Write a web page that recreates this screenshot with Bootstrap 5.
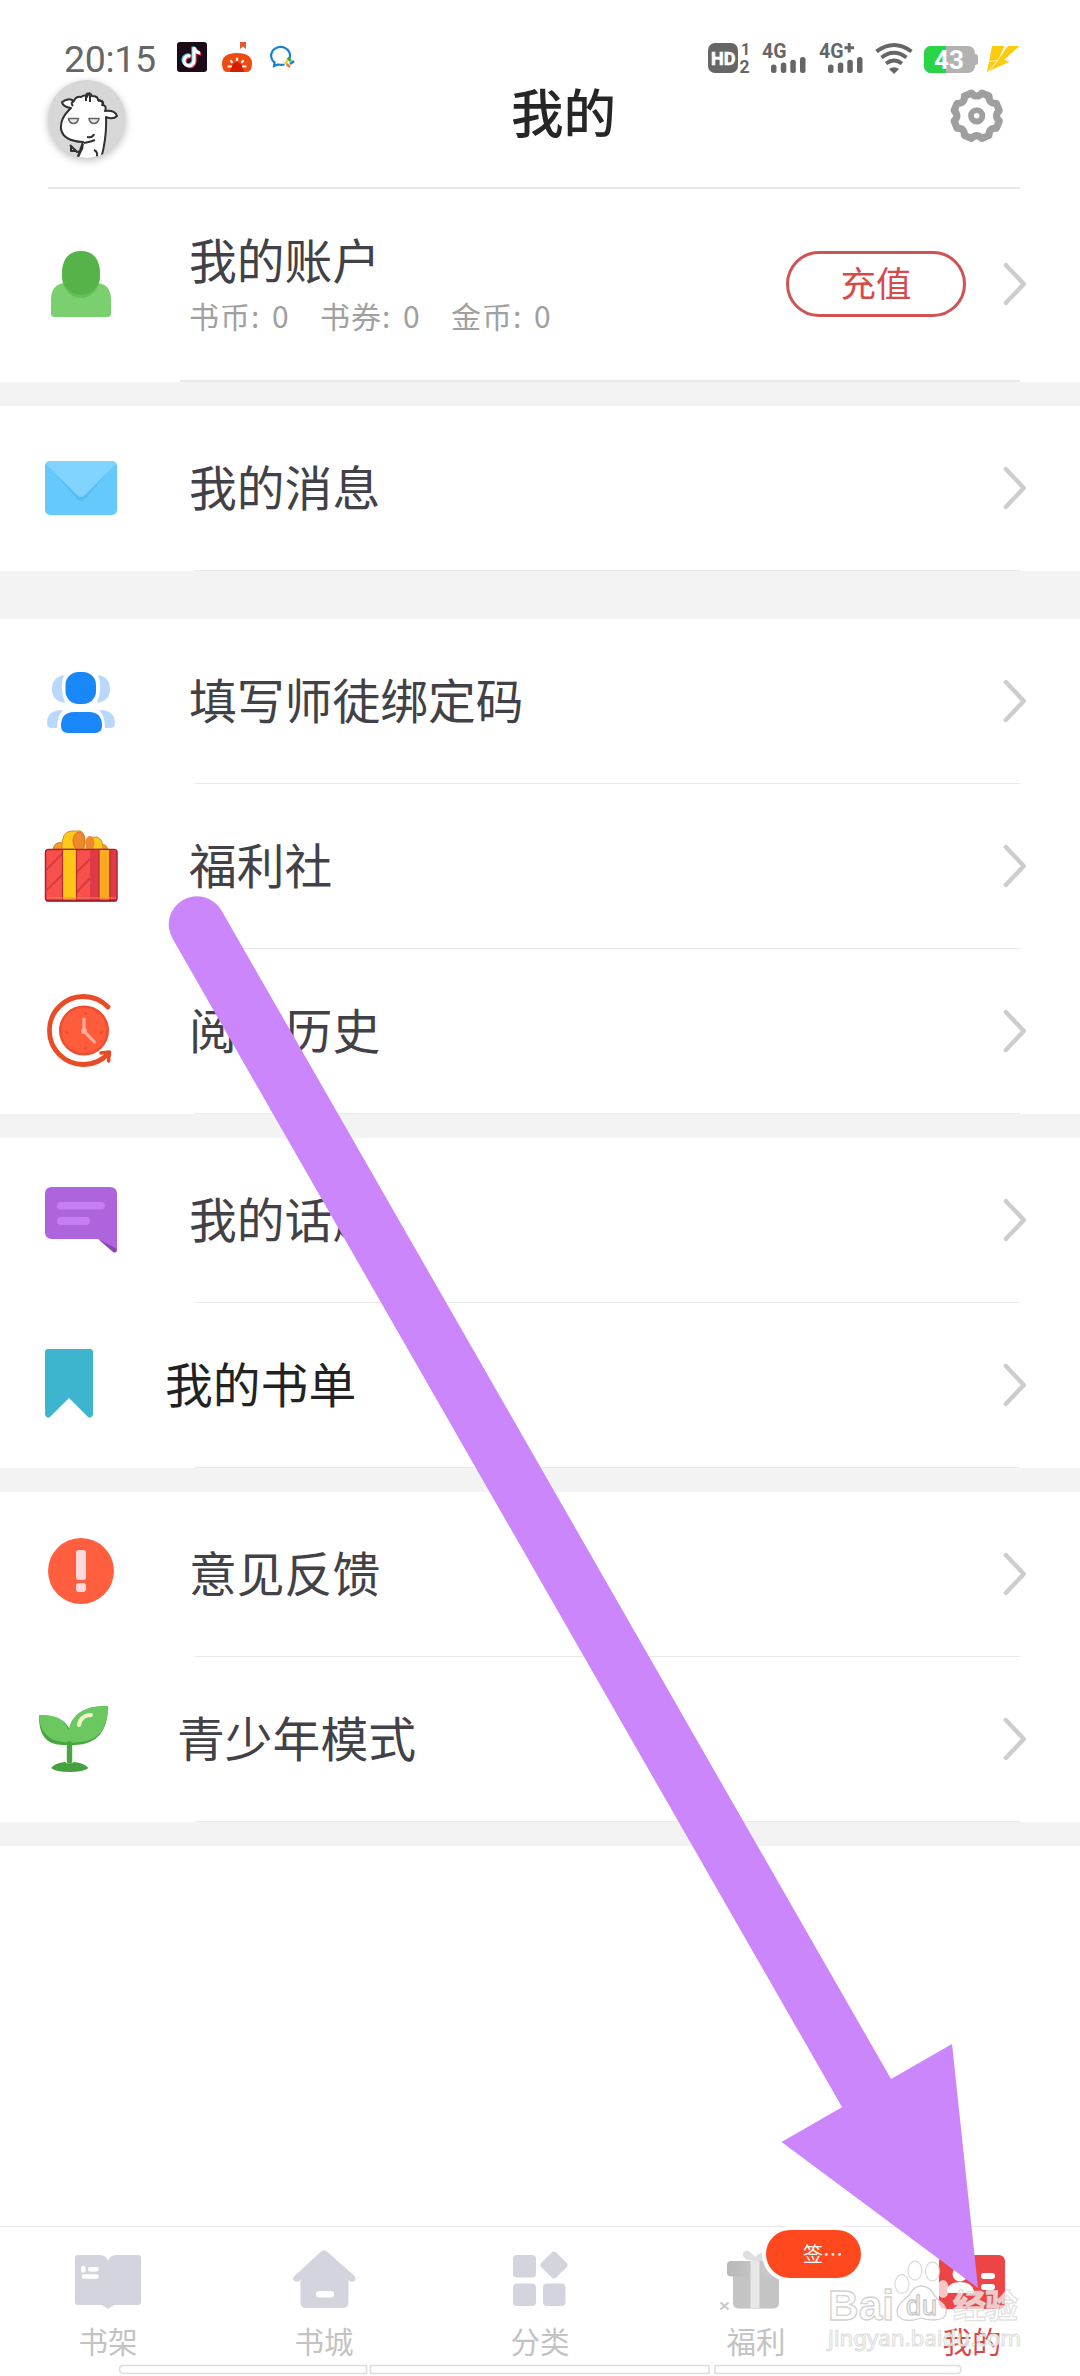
<!DOCTYPE html>
<html lang="zh-CN">
<head>
<meta charset="utf-8">
<meta name="viewport" content="width=device-width, initial-scale=1">
<title>我的</title>
<link rel="stylesheet" href="https://cdn.jsdelivr.net/npm/bootstrap@5.3.0/dist/css/bootstrap.min.css">
<style>
  body { font-family: "Noto Sans CJK SC", "Noto Sans", sans-serif; background: #fff; color: #414147; }
  svg { display: block; flex: none; }
  .screen { width: 1080px; height: 2376px; }
  .status-bar { height: 76px; padding: 36px 60px 0 64px; color: #666; }
  .clock { font: 37.5px/46px Roboto, sans-serif; width: 113px; letter-spacing: -.3px; }
  .title-bar { height: 113px; margin: 0 60px 0 48px; border-bottom: 2px solid #e9e9ea; }
  .avatar { margin: -7px 0 0 -8px; }
  .page-title { font-size: 52.5px; line-height: 76px; font-weight: 500; color: #262626; padding-left: 59px; margin-top: -4px; }
  .entry { height: 165px; background: linear-gradient(#e9e9eb, #e9e9eb) 195px 100% / 825px 1px no-repeat #fff; padding: 0 53px 0 30px; }
  .entry-account { height: 193px; padding-bottom: 3px; background-position: 180px 100%; background-size: 840px 2px; }
  .entry-label { font-size: 47.8px; line-height: 60px; margin-left: 59px; padding-bottom: 6px; }
  .label-book { margin-left: 35px; color: #222; }
  .label-teen { margin-left: 47px; }
  .chevron { margin-bottom: 1px; }
  .section-gap { height: 24px; background: #f3f3f3; }
  .section-gap-lg { height: 48px; }
  .account-copy { margin-left: 59px; padding-top: 1px; }
  .account-name { font-size: 47.8px; line-height: 54px; }
  .coins { font-size: 30px; line-height: 44px; color: #a0a0a0; margin-top: 7px; }
  .coins > div { width: 131px; }
  .coins span { display: inline-block; width: 83px; letter-spacing: 1px; }
  .btn-recharge { width: 180px; height: 66px; padding: 0; border: 3px solid #cf5353; border-radius: 33px; color: #d84a4a; font-size: 35.5px; line-height: 55px; padding-bottom: 5px; margin-right: 37px; }
  .tab-bar { height: 150px; border-top: 1px solid #e8e8e8; padding-top: 13px; }
  .tab-item { color: #c3c3c3; font-size: 29.5px; line-height: 40px; text-decoration: none; }
  .tab-item.current { color: #d94848; }
  .tab-item svg { margin-bottom: 5px; }
  .sign-badge { left: 118px; top: -10px; width: 95px; height: 48px; border-radius: 24px; background: #ff481d; color: #fff; font-size: 20px; line-height: 48px; padding-left: 37px; box-shadow: 0 0 0 4px #fff; }
  .overlay { left: 0; top: 0; pointer-events: none; }
</style>
<script src="https://cdn.jsdelivr.net/npm/bootstrap@5.3.0/dist/js/bootstrap.bundle.min.js"></script>
</head>
<body>
<svg width="0" height="0" class="position-absolute">
  <symbol id="chev" viewBox="0 0 24 44"><path d="M2.8 3 20.800 22 2.800 41" fill="none" stroke="#cdcdcd" stroke-width="4.400" stroke-linecap="round" stroke-linejoin="round"/></symbol>
</svg>
<div class="screen position-relative overflow-hidden d-flex flex-column">

  <div class="status-bar d-flex align-items-start">
    <div class="clock">20:15</div>
    <svg width="120" height="40" viewBox="177 36 120 40">
      <rect x="177" y="42" width="30" height="30" rx="3" fill="#1d0a18"/>
      <g fill="none" stroke-width="3.200"><path d="M190.500 56a5 5 0 1 0 3.500 5V47.500q1.500 5 6 5.500" stroke="#ee3b5b" transform="translate(1 .8)"/><path d="M190.500 56a5 5 0 1 0 3.500 5V47.500q1.500 5 6 5.500" stroke="#35d5dc" transform="translate(-1 -.8)"/><path d="M190.500 56a5 5 0 1 0 3.500 5V47.500q1.500 5 6 5.500" stroke="#fff"/></g>
      <path d="M240 42h6v7l-3-2.500-3 2.500z" fill="#e25a2c"/>
      <path d="M222 63c0-6 5-10 15-10s15 4 15 10c0 6-2 9-5 9h-20c-3 0-5-3-5-9z" fill="#ee4b14"/>
      <path d="M230 72q2-10 7-10t7 10z" fill="#d51c05"/>
      <g stroke="#fff3e8" stroke-width="2.200" stroke-linecap="round"><path d="M237 58.500v1.500M231 61l1 1.200M243 61l-1 1.200M228.500 66.500h2.500M243 66.500h2.500"/></g>
      <path d="M284.500 64.500q-3 .8-6.500 0l-4 1.500.6-3.500a9.500 8.800 0 1 1 15-4" fill="none" stroke="#1781cf" stroke-width="2.200"/>
      <path d="m287.500 58 3.500 3" stroke="#36a936" stroke-width="2.600"/><path d="m290 64 4-3" stroke="#1580cd" stroke-width="2.600"/><path d="m286.500 64 3.500 3" stroke="#f47c28" stroke-width="2.600"/><path d="m285 64 3-4" stroke="#f3c928" stroke-width="2.200"/>
    </svg>
    <svg class="ms-auto" width="316" height="40" viewBox="704 36 316 40" font-family="Roboto, sans-serif" font-weight="700" fill="#666">
      <rect x="708" y="43" width="30" height="30" rx="7"/><text x="711" y="64.500" font-size="18.500" fill="#fff" stroke="#fff" stroke-width=".6" textLength="24.500" lengthAdjust="spacingAndGlyphs">HD</text>
      <text x="741" y="54.500" font-size="16">1</text><text x="739.500" y="72.500" font-size="17.500">2</text>
      <text x="762" y="57.500" font-size="20.500" textLength="24.500" lengthAdjust="spacingAndGlyphs">4G</text><text x="819" y="57.500" font-size="20.500" textLength="24.500" lengthAdjust="spacingAndGlyphs">4G</text><path d="M849.200 43v9.500M844.500 47.800h9.500" stroke="#666" stroke-width="3"/>
      <g id="bars"><rect x="771" y="64.500" width="5.500" height="8.500" rx="2.500"/><rect x="780.800" y="62.500" width="5.500" height="10.500" rx="2.500"/><rect x="790.300" y="59.800" width="5.500" height="13.200" rx="2.500"/><rect x="800" y="57" width="5.500" height="16" rx="2.500"/></g>
      <use href="#bars" x="57"/>
      <g fill="none" stroke="#666" stroke-width="4"><path d="M876.500 51.500q17.500-13 35 0M881.500 57.500q12.500-9.500 25 0M886 63.500q8-6 16 0"/></g><path d="M889 69q5-3.500 10 0l-5 5z"/>
      <rect x="924" y="46" width="51" height="27" rx="7" fill="#b2b2b2"/><path d="M931 46h15v27h-15a7 7 0 0 1-7-7V53a7 7 0 0 1 7-7z" fill="#29d445"/><path d="M975 54q3 0 3 2.500v6q0 2.500-3 2.500z" fill="#b2b2b2"/>
      <text x="934" y="68.500" font-size="25" fill="#fff" textLength="30" lengthAdjust="spacingAndGlyphs">43</text>
      <path d="M992 46h12.500l-6.500 14 10-14h11.500l-15.500 14 6 1.500-23 10.500z" fill="#fccb0c"/><path d="m989 71 9.500-11.500M988 61.500l10-1" stroke="#fff" stroke-width=".8"/>
    </svg>
  </div>

  <header class="title-bar d-flex justify-content-between align-items-start">
    <svg width="100" height="100" viewBox="40 69 100 100" class="avatar overflow-visible">
      <defs><clipPath id="face"><circle cx="86.800" cy="118.700" r="39"/></clipPath>
      <filter id="soft" x="-30%" y="-30%" width="160%" height="160%"><feGaussianBlur stdDeviation="4"/></filter></defs>
      <circle cx="86.800" cy="121.500" r="38.500" fill="#000" opacity=".28" filter="url(#soft)"/>
      <circle cx="86.800" cy="119" r="39" fill="#d7d7d7"/>
      <g clip-path="url(#face)" stroke="#303030" stroke-width="2" fill="#fff" stroke-linejoin="round">
        <path d="M71 108q-8-1-9-6 7-5 12-1 2-5 7-4 4-3 6 0 2-7 5-1 6 0 6 4 6 0 5 5 4 1 2 6 10-1 12 5-4 4-11 1 1 20-5 42H77l6-17q-20-1-22-13-1-10 8-19z"/>
        <path d="M86 101v-5q1-5 4 0v6M98 101q6-1 4 5M74 101q-4 2-1 5M83 144q-2 8-5 13M95 140q-5 2-11 3M94 150q5 2 2 9" fill="none"/>
        <path d="M68.500 118.500h10q-1 5-5 5t-5-5zM89 118.500h10q-1 5-5 5t-5-5z" fill="#e8e8e8" stroke="#666" stroke-width="1.600"/>
        <path d="M87 137q6 1 7-3M70 145l7 7q7-1 5-7M71 147v4h6" fill="none" stroke-width="2"/>
      </g>
    </svg>
    <h1 class="page-title mb-0">我的</h1>
    <svg width="92" height="80" viewBox="928 76 92 80">
      <g fill="none" stroke="#9f9f9f" stroke-linejoin="round" transform="translate(976.700 115.800)">
      <path stroke-width="7.200" d="M5.200-22.600 12.300-19.700Q12-12 19.700-12.300L22.600-5.200Q17 0 22.600 5.200L19.700 12.300Q12 12 12.300 19.700L5.200 22.600Q0 17-5.200 22.600L-12.300 19.700Q-12 12-19.700 12.300L-22.600 5.200Q-17 0-22.600-5.200L-19.700-12.300Q-12-12-12.300-19.700L-5.200-22.600Q0-17 5.200-22.600z"/>
      <circle r="5.700" stroke-width="5.800"/></g>
    </svg>
  </header>

  <main>
    <div class="entry entry-account d-flex align-items-center">
      <svg width="100" height="100" viewBox="30 234 100 100"><path d="M51 314v-14q0-16 14-17h32q14 1 14 17v14q0 3-4 3H55q-4 0-4-3z" fill="#7acf6f"/><path d="M62 276c0-16 7-23 19-23s19 7 19 23c0 12-8 22-19 22s-19-10-19-22z" fill="#66bf59"/><path d="M62 274c0-15 7-23 19-23s19 8 19 23c0 12-8 21-19 21s-19-9-19-21z" fill="#56b349"/></svg>
      <div class="account-copy"><div class="account-name">我的账户</div>
        <div class="coins d-flex"><div><span>书币:</span>0</div><div><span>书券:</span>0</div><div><span>金币:</span>0</div></div></div>
      <button class="btn btn-recharge ms-auto" type="button">充值</button>
      <svg width="24" height="44"><use href="#chev"/></svg>
    </div>
    <div class="section-gap"></div>
    <div class="entry d-flex align-items-center">
      <svg width="100" height="101" viewBox="30 438 100 101"><rect x="45" y="461" width="72" height="54" rx="5" fill="#65c9fc"/><path d="m46 463 31 36q4 4 8 0l31-36z" fill="#55bdf4"/><path d="M46 464q1-3 5-3h60q4 0 5 3L85 495q-4 4-8 0z" fill="#81d4ff"/></svg>
      <div class="entry-label">我的消息</div><svg class="chevron ms-auto" width="24" height="44"><use href="#chev"/></svg>
    </div>
    <div class="section-gap section-gap-lg"></div>

    <div class="entry d-flex align-items-center">
      <svg width="100" height="101" viewBox="30 651 100 101"><g fill="#b9d9fc"><path d="M64 675q-5 12 1 28-13-2-13-14t12-14zM98 675q5 12-1 28 13-2 13-14t-12-14zM63 710q-6 6-6 18h-5q-5 0-5-5 0-13 16-13zM99 710q6 6 6 18h5q5 0 5-5 0-13-16-13z"/></g><rect x="65.500" y="672" width="30.500" height="32" rx="13" fill="#1a87f8"/><path d="M74 712h15q13 0 13 14 0 7-7 7H68q-7 0-7-7 0-14 13-14z" fill="#1a87f8"/></svg>
      <div class="entry-label">填写师徒绑定码</div><svg class="chevron ms-auto" width="24" height="44"><use href="#chev"/></svg>
    </div>
    <div class="entry d-flex align-items-center">
      <svg width="100" height="101" viewBox="30 816 100 101"><path d="M53 849q2-8 9-6l5 6zM96 849q8-9 12 0z" fill="#f39a2c" stroke="#d67a25"/><path d="M62 849q-1-18 10-18h9q6 5 3 18z" fill="#ffc91a" stroke="#d8892b"/><ellipse cx="79" cy="841" rx="6" ry="9" fill="#ef872c" stroke="#d6732b"/><path d="M86 849q0-13 11-12 6 2 6 12z" fill="#ffc91a" stroke="#d8892b"/><ellipse cx="90" cy="843" rx="4.500" ry="7" fill="#ef872c"/>
      <rect x="45.500" y="849.500" width="71.500" height="51.500" rx="3" fill="#f8514b" stroke="#a92030" stroke-width="1.500"/><path d="M90 850h26v50H90z" fill="#df3a48"/><path d="m46 870 17-17M46 891l17-17M76 873l14-14M76 893l14-15" stroke="#d43c41" stroke-width="2"/><path d="M63 850h13v50H63z" fill="#ffc61a"/><path d="M99 850h10.500v50H99z" fill="#fba922"/><path d="M62.500 850v50M76.500 850v50M99 850v50M110 850v50" stroke="#b72b31" stroke-width="1.200"/><path d="M47 898h69" stroke="#ff7b5e" stroke-width="2" opacity=".5"/><path d="M46 900.500h71" stroke="#a92030" stroke-width="2"/></svg>
      <div class="entry-label">福利社</div><svg class="chevron ms-auto" width="24" height="44"><use href="#chev"/></svg>
    </div>
    <div class="entry d-flex align-items-center">
      <svg width="100" height="101" viewBox="30 981 100 101"><path d="M108 1007a34 34 0 1 0 0 47" fill="none" stroke="#e94b27" stroke-width="4.800" stroke-linecap="round"/><path d="m101 1053 8.500-1-1 9" fill="none" stroke="#e94b27" stroke-width="3.500" stroke-linecap="round" stroke-linejoin="round"/><circle cx="84" cy="1030.500" r="23.800" fill="#ff5c3c" stroke="#ec4e2f" stroke-width="2.400"/><g fill="#e84e31"><circle cx="85.500" cy="1013.500" r="1.500"/><circle cx="85.500" cy="1048.500" r="1.500"/><circle cx="66.500" cy="1032.500" r="1.500"/><circle cx="101.500" cy="1032.500" r="1.500"/></g><path d="M84 1019v12l10.500 11" fill="none" stroke="#ffad9b" stroke-width="3.200" stroke-linecap="round"/><circle cx="84" cy="1031" r="3" fill="#ffad9b"/></svg>
      <div class="entry-label">阅读历史</div><svg class="chevron ms-auto" width="24" height="44"><use href="#chev"/></svg>
    </div>
    <div class="section-gap"></div>

    <div class="entry d-flex align-items-center">
      <svg width="100" height="101" viewBox="30 1170 100 101"><path d="m98 1239 15 13q4 2 4-3v-3z" fill="#8a46b4"/><path d="M52 1187h58q7 0 7 7v55l-19-10H52q-7 0-7-7v-38q0-7 7-7z" fill="#ae64dc"/><rect x="57" y="1202" width="48" height="7.500" rx="3.700" fill="#c67ff2"/><rect x="57" y="1217" width="33" height="8" rx="3.800" fill="#c67ff2"/></svg>
      <div class="entry-label">我的话题</div><svg class="chevron ms-auto" width="24" height="44"><use href="#chev"/></svg>
    </div>
    <div class="entry d-flex align-items-center">
      <svg width="100" height="101" viewBox="30 1335 100 101"><path d="M48 1349h42q3 0 3 3v63q-2 4-5 2l-19-19-19 19q-3 2-5-2v-63q0-3 3-3z" fill="#3db5cf"/></svg>
      <div class="entry-label label-book">我的书单</div><svg class="chevron ms-auto" width="24" height="44"><use href="#chev"/></svg>
    </div>
    <div class="section-gap"></div>

    <div class="entry d-flex align-items-center">
      <svg width="100" height="101" viewBox="30 1524 100 101"><circle cx="81" cy="1571" r="33" fill="#ff5f3f"/><rect x="76" y="1550" width="10" height="30" rx="3" fill="#ffd9da"/><rect x="76" y="1583" width="10" height="9" rx="3" fill="#ffd9da"/></svg>
      <div class="entry-label">意见反馈</div><svg class="chevron ms-auto" width="24" height="44"><use href="#chev"/></svg>
    </div>
    <div class="entry d-flex align-items-center">
      <svg width="100" height="101" viewBox="30 1689 100 101"><path d="M39 1715q-1 30 24 30h12q33-1 33-39-34-1-38 24-6-15-31-15z" fill="#48a641"/><path d="M39 1715q24-1 29.500 15 5-25 39.500-24 0 29-21 35-18 4-33-1-15-7-15-25z" fill="#6bc861"/><path d="M79 1725q2-10 12-10" fill="none" stroke="#edf8c7" stroke-width="4" stroke-linecap="round"/><path d="M51 1768q4-5 14-6 4 3 9 0 10 1 14.500 6-5 4-19 4t-18.500-4z" fill="#45a23e"/><path d="M69.500 1744v17" stroke="#48a641" stroke-width="5.400" stroke-linecap="round"/></svg>
      <div class="entry-label label-teen">青少年模式</div><svg class="chevron ms-auto" width="24" height="44"><use href="#chev"/></svg>
    </div>
    <div class="section-gap"></div>
  </main>

  <nav class="tab-bar mt-auto d-flex">
    <a class="tab-item col d-flex flex-column align-items-center" href="#"><svg width="100" height="75" viewBox="58 2240 100 75"><path d="M78 2255h22q6 0 8 6 2-6 8-6h22q3 0 3 3v44q0 3-3 3h-24l-6 4-6-4H78q-3 0-3-3v-44q0-3 3-3z" fill="#d4d4de"/><path d="M83.300 2268v2.500M90 2269.200h6.500M84 2276.500h12.500" stroke="#fff" stroke-width="4.600" stroke-linecap="round"/></svg>书架</a>
    <a class="tab-item col d-flex flex-column align-items-center" href="#"><svg width="100" height="75" viewBox="274 2240 100 75"><path d="M320.500 2252q3.500-3.500 7 0l27 24q2 3 0 5-3 2-6-1v22q0 6-6 6h-36q-6 0-6-6v-22q-3 3-6 1-3-2 0-5z" fill="#d4d4de"/><rect x="316" y="2291" width="18" height="6.500" rx="3" fill="#fff"/></svg>书城</a>
    <a class="tab-item col d-flex flex-column align-items-center" href="#"><svg width="100" height="75" viewBox="490 2240 100 75" fill="#d4d4de"><rect x="513" y="2255" width="23" height="22.500" rx="4"/><rect x="513" y="2283.500" width="23" height="22.500" rx="4"/><rect x="543" y="2283.500" width="22.500" height="22.500" rx="4"/><rect x="543.500" y="2254.500" width="21" height="21" rx="3.500" transform="rotate(45 554 2265)"/></svg>分类</a>
    <a class="tab-item col d-flex flex-column align-items-center position-relative" href="#"><svg width="100" height="75" viewBox="706 2240 100 75"><defs><linearGradient id="lid"><stop stop-color="#b9b9b9"/><stop offset="1" stop-color="#cecece"/></linearGradient></defs><path d="M755 2261q-14-1-12-8 4-6 12 4 6-6 12-6v10z" fill="#dedede"/><rect x="733" y="2270" width="46" height="38.500" rx="5" fill="#c4c4c4"/><rect x="727" y="2261" width="55" height="15.500" rx="4" fill="url(#lid)"/><path d="M750.500 2261h9v47h-9z" fill="#e7e7e7"/><path d="m720.500 2302.500 8 7M728.500 2302.500l-8 7" stroke="#c8c8c8" stroke-width="2"/></svg>福利<span class="sign-badge position-absolute text-nowrap">签⋯</span></a>
    <a class="tab-item current col d-flex flex-column align-items-center" href="#"><svg width="100" height="75" viewBox="922 2240 100 75"><rect x="939" y="2255" width="66" height="54" rx="6" fill="#ed4545"/><g fill="#fff"><circle cx="960" cy="2274" r="7.500"/><path d="M947 2291q1-9 13-9t14 9q0 2-3 2h-21q-3 0-3-2z"/><rect x="981" y="2273" width="14" height="6" rx="3"/><rect x="981" y="2284" width="14" height="6" rx="3"/></g></svg>我的</a>
  </nav>

  <svg class="overlay position-absolute" width="1080" height="2376" viewBox="0 0 1080 2376">
    <path d="M197 924.500 866.500 2093" stroke="#ca86fa" stroke-width="56.500" stroke-linecap="round"/>
    <path d="m952 2044 26 244-196.500-146z" fill="#ca86fa"/>
    <g fill="#fff" stroke="#dedede" stroke-width="1.600"><path d="M366.500 2365.500h-243q-4 0-4 4t4 4h243zM370.500 2365.500h338.500v8H370.500zM715 2365.500h242q4 0 4 4t-4 4H715z"/></g>
    <g fill="#fff" fill-opacity=".7" stroke="#d2d2d2" stroke-width="1.300" font-family="'Liberation Sans', 'Noto Sans CJK SC', sans-serif" font-weight="700">
      <text x="828" y="2320" font-size="43" textLength="66" lengthAdjust="spacingAndGlyphs">Bai</text>
      <g stroke-opacity=".75"><ellipse cx="902" cy="2284" rx="7" ry="9.500"/><ellipse cx="915" cy="2270.500" rx="7" ry="9.500"/><ellipse cx="932.500" cy="2271.500" rx="7" ry="9.500"/></g><ellipse cx="943" cy="2289" rx="6" ry="9" stroke="none"/>
      <path d="M921 2286q9 0 13 9 5 6 10 10 5 8-1 13-8 4-22 0-14 5-21 0-6-6 0-14l10-10q4-8 11-8z"/>
      <text x="906" y="2315" font-size="27" font-weight="400" stroke="#c9c9c9" textLength="31">du</text>
      <text x="953" y="2318" font-size="33" stroke="#dadada" stroke-opacity=".8" textLength="65" font-family="'Noto Sans CJK SC', sans-serif">经验</text>
      <text x="828" y="2346" font-size="22" stroke="#dcdcdc" stroke-width="1" font-weight="400" textLength="193" lengthAdjust="spacingAndGlyphs" font-family="'Noto Sans', sans-serif">jingyan.baidu.com</text>
    </g>
  </svg>
</div>
</body>
</html>
